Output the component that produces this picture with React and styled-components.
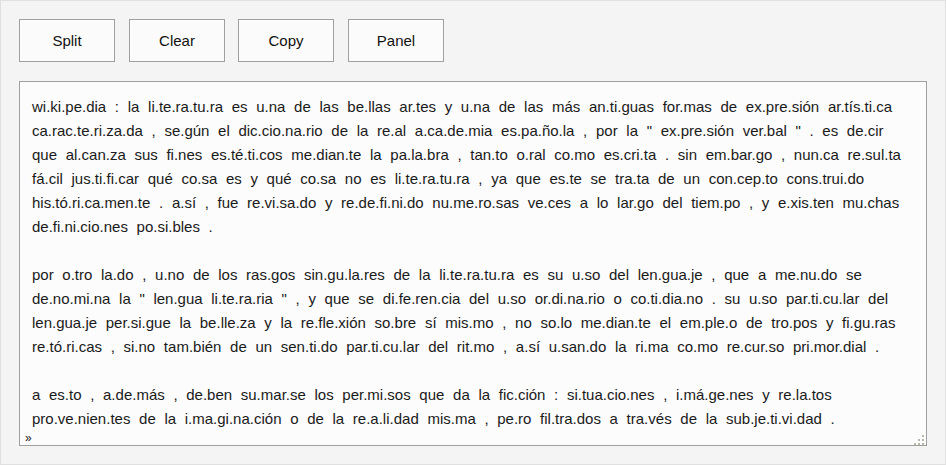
import React from "react";
import styled, { createGlobalStyle } from "styled-components";

const Global = createGlobalStyle`
  html, body { margin: 0; padding: 0; background: #f4f4f4; }
  #root { width: 946px; height: 465px; }
`;

const Page = styled.div`
  box-sizing: border-box;
  width: 946px;
  height: 465px;
  border: 1px solid #e0e0e0;
  background: #f4f4f4;
  padding: 18px 18px 0 18px;
  display: flex;
  flex-direction: column;
  gap: 19px;
  font-family: "Liberation Sans", Arial, sans-serif;
`;

const Toolbar = styled.div`
  display: flex;
  gap: 14px;
`;

const Button = styled.button`
  box-sizing: border-box;
  width: 96px;
  height: 43px;
  margin-left: ${(p) => (p.$nudge ? "-1px" : "0")};
  border: 1px solid #a0a0a0;
  background: #fbfbfb;
  color: #111;
  font-family: "Liberation Sans", Arial, sans-serif;
  font-size: 15px;
  padding: 0;
  border-radius: 0;
`;

const Editor = styled.div`
  position: relative;
  box-sizing: border-box;
  width: 908px;
  height: 365px;
  border: 1px solid #a0a0a0;
  background: #fcfcfc;
  padding: 13px 12px 0 12px;
  overflow: hidden;
  color: #1a1a1a;
  font-size: 15px;
  line-height: 24px;
  word-spacing: 4.5px;
`;

const Paragraph = styled.div`
  & + & { margin-top: 24px; }
`;

const Line = styled.div`
  white-space: nowrap;
`;

const Tail = styled.div`
  margin-left: -7px;
  font-size: 12px;
  line-height: 14px;
`;

const Grip = styled.svg`
  position: absolute;
  right: 0;
  bottom: 0;
`;

const paragraphs = [
  [
    "wi.ki.pe.dia : la li.te.ra.tu.ra es u.na de las be.llas ar.tes y u.na de las más an.ti.guas for.mas de ex.pre.sión ar.tís.ti.ca",
    "ca.rac.te.ri.za.da , se.gún el dic.cio.na.rio de la re.al a.ca.de.mia es.pa.ño.la , por la \" ex.pre.sión ver.bal \" . es de.cir",
    "que al.can.za sus fi.nes es.té.ti.cos me.dian.te la pa.la.bra , tan.to o.ral co.mo es.cri.ta . sin em.bar.go , nun.ca re.sul.ta",
    "fá.cil jus.ti.fi.car qué co.sa es y qué co.sa no es li.te.ra.tu.ra , ya que es.te se tra.ta de un con.cep.to cons.trui.do",
    "his.tó.ri.ca.men.te . a.sí , fue re.vi.sa.do y re.de.fi.ni.do nu.me.ro.sas ve.ces a lo lar.go del tiem.po , y e.xis.ten mu.chas",
    "de.fi.ni.cio.nes po.si.bles .",
  ],
  [
    "por o.tro la.do , u.no de los ras.gos sin.gu.la.res de la li.te.ra.tu.ra es su u.so del len.gua.je , que a me.nu.do se",
    "de.no.mi.na la \" len.gua li.te.ra.ria \" , y que se di.fe.ren.cia del u.so or.di.na.rio o co.ti.dia.no . su u.so par.ti.cu.lar del",
    "len.gua.je per.si.gue la be.lle.za y la re.fle.xión so.bre sí mis.mo , no so.lo me.dian.te el em.ple.o de tro.pos y fi.gu.ras",
    "re.tó.ri.cas , si.no tam.bién de un sen.ti.do par.ti.cu.lar del rit.mo , a.sí u.san.do la ri.ma co.mo re.cur.so pri.mor.dial .",
  ],
  [
    "a es.to , a.de.más , de.ben su.mar.se los per.mi.sos que da la fic.ción : si.tua.cio.nes , i.má.ge.nes y re.la.tos",
    "pro.ve.nien.tes de la i.ma.gi.na.ción o de la re.a.li.dad mis.ma , pe.ro fil.tra.dos a tra.vés de la sub.je.ti.vi.dad .",
  ],
];

export default function App() {
  return (
    <>
      <Global />
      <Page>
        <Toolbar>
          <Button>Split</Button>
          <Button>Clear</Button>
          <Button $nudge>Copy</Button>
          <Button>Panel</Button>
        </Toolbar>
        <Editor>
          {paragraphs.map((p, i) => (
            <Paragraph key={i}>
              {p.map((l, j) => (
                <Line key={j}>{l}</Line>
              ))}
            </Paragraph>
          ))}
          <Tail>»</Tail>
          <Grip width="12" height="12" viewBox="0 0 12 12">
            <g fill="#b8b8a8">
              <rect x="8" y="2" width="2" height="2" />
              <rect x="4" y="6" width="2" height="2" />
              <rect x="8" y="6" width="2" height="2" />
              <rect x="0" y="10" width="2" height="2" />
              <rect x="4" y="10" width="2" height="2" />
              <rect x="8" y="10" width="2" height="2" />
            </g>
          </Grip>
        </Editor>
      </Page>
    </>
  );
}
